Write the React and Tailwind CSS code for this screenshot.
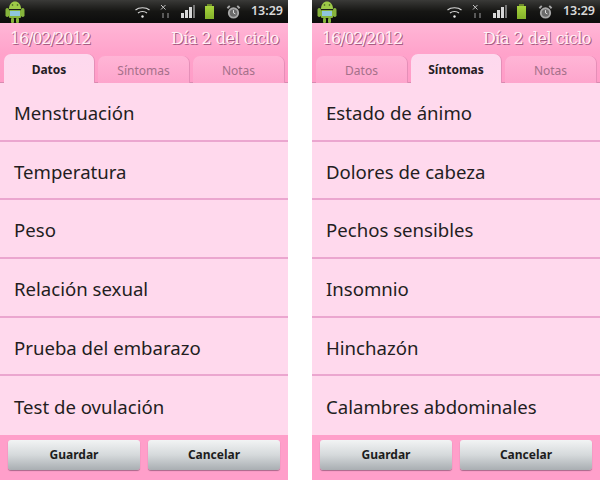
import React from "react";

const screens = [
  {
    active: 0,
    rows: [
      "Menstruación",
      "Temperatura",
      "Peso",
      "Relación sexual",
      "Prueba del embarazo",
      "Test de ovulación",
    ],
  },
  {
    active: 1,
    rows: [
      "Estado de ánimo",
      "Dolores de cabeza",
      "Pechos sensibles",
      "Insomnio",
      "Hinchazón",
      "Calambres abdominales",
    ],
  },
];

const tabs = ["Datos", "Síntomas", "Notas"];

function Robot() {
  return (
    <svg width="22" height="23" viewBox="0 0 22 23">
      <rect x="1.5" y="8" width="3.5" height="9" rx="1.7" fill="#86b43c" />
      <rect x="17" y="8" width="3.5" height="9" rx="1.7" fill="#86b43c" />
      <path d="M5 9 C5 -1 17 -1 17 9 Z" fill="#9ecb48" />
      <rect x="5" y="10" width="12" height="8" rx="1" fill="#86b43c" />
      <rect x="6" y="11" width="10" height="5" fill="#8fc6dc" />
      <rect x="7" y="18" width="3" height="5" rx="1" fill="#86b43c" />
      <rect x="12" y="18" width="3" height="5" rx="1" fill="#86b43c" />
      <circle cx="8.5" cy="5" r="0.8" fill="#39501a" />
      <circle cx="13.5" cy="5" r="0.8" fill="#39501a" />
    </svg>
  );
}

function StatusBar() {
  return (
    <div className="flex h-[23px] items-center bg-gradient-to-b from-[#3a3a38] via-[#161614] to-[#0c0c0c] pl-[4px] pr-[5px]">
      <Robot />
      <div className="ml-auto flex items-center">
        {/* wifi */}
        <svg width="15" height="12" viewBox="0 0 15 12" fill="none" stroke="#d8d8d8" strokeWidth="1.2">
          <path d="M0.5 4 C4 1 11 1 14.5 4" />
          <path d="M3 7 C5.5 5 9.5 5 12 7" />
          <circle cx="7.5" cy="10.5" r="1.2" fill="#e8e8e8" stroke="none" />
        </svg>
        {/* no data */}
        <svg className="ml-[10px]" width="10" height="15" viewBox="0 0 10 15" fill="none" stroke="#c4c4c4" strokeWidth="1">
          <path d="M1 1 L5.5 5.5 M5.5 1 L1 5.5" />
          <path d="M3 9 V14 M8 9 V14" stroke="#707070" strokeWidth="1.5" />
        </svg>
        {/* signal */}
        <div className="ml-[11px] flex h-[13px] items-end gap-px">
          <div className="h-[5px] w-[3px] bg-[#d8d8d8]" />
          <div className="h-[8px] w-[3px] bg-[#d8d8d8]" />
          <div className="h-[11px] w-[3px] bg-[#d8d8d8]" />
          <div className="h-[13px] w-[2px] bg-[#777777]" />
        </div>
        {/* battery */}
        <div className="ml-[10px] flex flex-col items-center">
          <div className="h-[2px] w-[5px] bg-[#6d8a2c]" />
          <div className="h-[13px] w-[9px] bg-gradient-to-b from-[#a8d43c] to-[#82b02a]" />
        </div>
        {/* alarm */}
        <svg className="ml-[12px]" width="15" height="16" viewBox="0 0 16 16" fill="none" stroke="#a8a8a8">
          <circle cx="8" cy="9" r="5" strokeWidth="2" fill="#6a6a6a" />
          <path d="M8 6 V9 L10 10" stroke="#e4e4e4" />
          <path d="M1.5 4 L4 1.5 M14.5 4 L12 1.5" strokeWidth="2" />
        </svg>
        <span className="ml-[10px] font-['Noto_Sans',sans-serif] text-[12.5px] font-semibold leading-none text-[#d8d8d8]">
          13:29
        </span>
      </div>
    </div>
  );
}

function Tab({ label, isActive }) {
  if (isActive) {
    return (
      <div className="flex h-[29px] w-[90px] items-center justify-center rounded-t-[7px] bg-gradient-to-b from-[#fdd9ee] to-[#ffd9ed] pt-[3px] font-['Noto_Sans',sans-serif] text-[12px] font-bold text-[#262024] shadow-[1px_0_0_#e58fb8]">
        {label}
      </div>
    );
  }
  return (
    <div className="flex h-[27px] w-[91px] items-center justify-center rounded-t-[7px] bg-gradient-to-b from-[#ffb5d6] to-[#fda5cc] pt-[3px] font-['Noto_Sans',sans-serif] text-[12px] text-[#a5708a] shadow-[1px_0_0_#e58fb8]">
      {label}
    </div>
  );
}

function Phone({ active, rows }) {
  return (
    <div className="flex h-[480px] w-[288px] flex-col overflow-hidden bg-[#ffd9ed]">
      <StatusBar />
      <div className="h-[60px] bg-gradient-to-b from-[#ffb6d6] via-[#ffa3cb] to-[#ff9cc7]">
        <div className="flex h-[31px] items-center justify-between pl-[10px] pr-[9px] pt-px font-['DejaVu_Serif',serif] text-[16px] text-[#fff0f7] [text-shadow:1px_1px_0_#a85c82]">
          <span className="tracking-[-1.2px]">16/02/2012</span>
          <span className="tracking-[-0.5px]">Día 2 del ciclo</span>
        </div>
        <div className="flex h-[29px] items-end gap-[4px] pl-[4px] shadow-[inset_0_-1px_0_#d98bb0]">
          {tabs.map((t, i) => (
            <Tab key={t} label={t} isActive={i === active} />
          ))}
        </div>
      </div>
      <div className="flex h-[352px] flex-col">
        {rows.map((r, i) => (
          <div
            key={r}
            className={`flex h-[59px] items-center pl-[14px] pt-[3px] font-['Noto_Sans',sans-serif] text-[18.6px] text-[#231d21] ${
              i < 5 ? "border-b-2 border-[#eba6cf]" : ""
            }`}
          >
            {r}
          </div>
        ))}
      </div>
      <div className="flex h-[45px] gap-[8px] bg-[#ff9fca] pl-[8px] pr-[8px] pt-[5px]">
        {["Guardar", "Cancelar"].map((b) => (
          <div
            key={b}
            className="flex h-[30px] w-[132px] items-center justify-center rounded-[3px] bg-gradient-to-b from-[#f2f4f4] via-[#d5d9db] to-[#a9aeb2] font-['Noto_Sans',sans-serif] text-[12px] font-bold text-[#1d1d1d] shadow-[0_1px_1px_#a8688a]"
          >
            {b}
          </div>
        ))}
      </div>
    </div>
  );
}

export default function App() {
  return (
    <div className="flex h-[480px] w-[600px] gap-[24px] bg-white">
      {screens.map((s) => (
        <Phone key={s.active} active={s.active} rows={s.rows} />
      ))}
    </div>
  );
}
